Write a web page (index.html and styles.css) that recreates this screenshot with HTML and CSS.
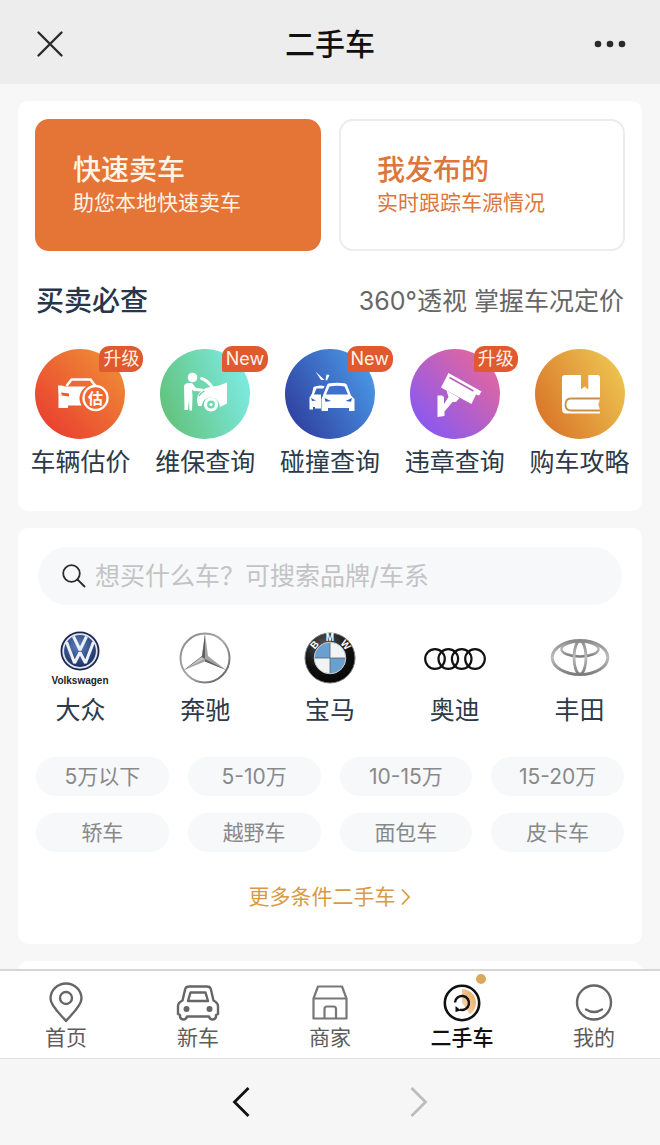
FILE: index.html
```html
<!DOCTYPE html>
<html lang="zh-CN">
<head>
<meta charset="utf-8">
<meta name="viewport" content="width=device-width, initial-scale=1">
<title>二手车</title>
<link rel="stylesheet" href="styles.css">
</head>
<body>
<div class="app">
  <header class="topbar">
    <button class="icon-btn" type="button" aria-label="关闭">
      <svg width="28" height="28" viewBox="0 0 28 28" fill="none" stroke="#2b2b2b" stroke-width="2.4" stroke-linecap="round"><path d="M2.500 2.500 25.500 25.500M25.500 2.500 2.500 25.500"/></svg>
    </button>
    <h1 class="topbar-title">二手车</h1>
    <button class="icon-btn" type="button" aria-label="更多">
      <svg width="32" height="8" viewBox="0 0 32 8" fill="#2b2b2b"><circle cx="4" cy="4" r="3.300"/><circle cx="16" cy="4" r="3.300"/><circle cx="28" cy="4" r="3.300"/></svg>
    </button>
  </header>

  <main class="content">
    <section class="card tools">
      <div class="actions">
        <a class="action action-primary" href="#sell"><strong>快速卖车</strong><span>助您本地快速卖车</span></a>
        <a class="action" href="#mine"><strong>我发布的</strong><span>实时跟踪车源情况</span></a>
      </div>
      <div class="section-head">
        <h2>买卖必查</h2>
        <p>360°透视 掌握车况定价</p>
      </div>
      <nav class="five-grid">
        <a class="tool" href="#value">
          <span class="disc disc-red">
            <svg viewBox="0 0 90 90">
              <path d="M31.500 37 36.500 30.500H55.500L60 36.500" fill="none" stroke="#fff" stroke-width="2.600" stroke-linejoin="round"/>
              <path d="M23 36.500h4l3 1h21q-7 5-6.500 13 .5 3 2 6H33v2.500h-9.500V47.500z" fill="#fff"/>
              <path d="M26 43.500l8 1v3l-7-1z" fill="#ee5a2e"/>
              <circle cx="60.500" cy="49" r="12" fill="#ef6a30" stroke="#fff" stroke-width="2.400"/>
              <text x="60.500" y="54.500" class="disc-char">估</text>
            </svg>
            <span class="badge">升级</span>
          </span>
          <span class="tile-label">车辆估价</span>
        </a>
        <a class="tool" href="#maintenance">
          <span class="disc disc-green">
            <svg viewBox="0 0 90 90" fill="#fff">
              <circle cx="32.500" cy="28.500" r="4.800"/>
              <path d="M24 37q1-3 4.500-3h3.500l4 5 7 .8-.5 2.700-9-.5-1.500-1.500.5 7-.5 14H29.500L29 51l-1 10H24.500z"/>
              <path d="M41.500 29.500Q47 31 52 38" fill="none" stroke="#fff" stroke-width="3" stroke-linecap="round"/>
              <path d="M37 51q0-8 9-12l13-2.500 8-3v21l-7 3.500q-1-9-9-9.500-8 0-9.500 8.500H38z"/>
              <path d="M39 47q2-3.500 5.500-5" stroke="#64cd9d" stroke-width="1.300" fill="none"/>
              <circle cx="51" cy="55.500" r="5.500" fill="none" stroke="#fff" stroke-width="3.200"/>
              <circle cx="51" cy="55.500" r="1.600"/>
            </svg>
            <span class="badge">New</span>
          </span>
          <span class="tile-label">维保查询</span>
        </a>
        <a class="tool" href="#collision">
          <span class="disc disc-blue">
            <svg viewBox="0 0 90 90" fill="#fff">
              <path d="M30.500 22.500l9 8.500h-3.500zM41.500 25.500l3 .5-2.500 5.500-1.500-.5z"/>
              <path d="M28.500 38q5-2.500 11-1l-1 2.500h-7l-2.500 6H36v14h-6V58h-2v2.500h-3.500V48.500l2.500-4z"/>
              <path d="M38 46.500 42 36q.8-1.500 2.500-1.800 8-1 15 0 1.800.3 2.500 1.800l4 10.500 3.500 3.500v12h-5.500v-3H43v3h-6.500V50z"/>
              <path d="M41 45.500 44.500 37.500q7.500-1.300 15 0L63 45.500z" fill="#3e70cf"/>
              <path d="M39.500 49l6.500 3-5.500 .8zM67 49l-6.500 3 5.500 .8zM26 49l5 2.500-4 .5z" fill="#345dbc"/>
            </svg>
            <span class="badge">New</span>
          </span>
          <span class="tile-label">碰撞查询</span>
        </a>
        <a class="tool" href="#violation">
          <span class="disc disc-purple">
            <svg viewBox="0 0 90 90" fill="#fff">
              <path d="M38.500 24 71.500 42.500 69 46.500 66 45.500 61.500 55 31 38.500z"/>
              <path d="M39.500 28.500 63.500 42" stroke="#b75fc5" stroke-width="1.600" fill="none"/>
              <path d="M36.500 41.500 49.500 49 46 53H42.500L34.500 62.500v4.500L27.500 68V46.500h4.500l2 1.500v7l4.500-7z"/>
            </svg>
            <span class="badge">升级</span>
          </span>
          <span class="tile-label">违章查询</span>
        </a>
        <a class="tool" href="#guide">
          <span class="disc disc-gold">
            <svg viewBox="0 0 90 90">
              <path d="M30 26H46V40.500L49.700 37.500 53.300 40.500V26H62.500Q65 26 65 28.500V50L63.300 55.500 65 61V64.500H31Q27 64.500 27 60V29Q27 26 30 26z" fill="#fff"/>
              <path d="M65 49.500H36Q30.500 49.500 30.500 55.500T36 61.500H65" fill="none" stroke="#c99048" stroke-width="1.800"/>
            </svg>
          </span>
          <span class="tile-label">购车攻略</span>
        </a>
      </nav>
    </section>

    <section class="card finder">
      <form class="search" role="search">
        <label for="q" aria-label="搜索">
          <svg width="24" height="24" viewBox="0 0 24 24" fill="none" stroke="#2b2b2b" stroke-width="1.800" stroke-linecap="round"><circle cx="9.500" cy="9.500" r="8.300"/><path d="M15.500 15.500 22.500 22.500"/></svg>
        </label>
        <input id="q" type="search" placeholder="想买什么车？可搜索品牌/车系">
      </form>

      <nav class="five-grid brands">
        <a class="brand" href="#vw">
          <svg width="60" height="56" viewBox="0 0 60 56">
            <defs><radialGradient id="vw" cx=".45" cy=".35" r=".7"><stop offset="0" stop-color="#5c82bd"/><stop offset="1" stop-color="#16275c"/></radialGradient></defs>
            <circle cx="30" cy="21" r="19.500" fill="#1b2550"/>
            <circle cx="30" cy="21" r="16.800" fill="url(#vw)" stroke="#dfe5ee" stroke-width="1.800"/>
            <g fill="none" stroke="#eef1f5" stroke-width="3" stroke-linejoin="bevel"><path d="M23.500 6.500 30 20 36.500 6.500"/><path d="M16.500 12 24.500 33 30 22.500 35.500 33 43.500 12"/></g>
            <text x="30" y="54" class="vw-name">Volkswagen</text>
          </svg>
          <span class="tile-label">大众</span>
        </a>
        <a class="brand" href="#benz">
          <svg width="56" height="56" viewBox="0 0 56 56">
            <defs><linearGradient id="mb" x1="0" y1="0" x2="1" y2="1"><stop offset="0" stop-color="#888"/><stop offset=".5" stop-color="#a9a9a9"/><stop offset="1" stop-color="#555"/></linearGradient></defs>
            <circle cx="28" cy="28" r="24.500" fill="none" stroke="url(#mb)" stroke-width="2"/>
            <path d="M28 3.500 31 26 49 40 28 31.500 7 40 25 26z" fill="#a4a4a4"/>
            <path d="M28 3.500V29L25 26zM28 29 49 40 28 31.500zM28 29 7 40 25 26z" fill="#606060"/>
            <path d="M28 29 9 39 24.500 27z" fill="#c4c4c4"/>
          </svg>
          <span class="tile-label">奔驰</span>
        </a>
        <a class="brand" href="#bmw">
          <svg width="56" height="56" viewBox="0 0 56 56">
            <defs><radialGradient id="bm" cx=".4" cy=".25" r=".8"><stop offset="0" stop-color="#55585c"/><stop offset=".6" stop-color="#111"/><stop offset="1" stop-color="#050505"/></radialGradient></defs>
            <circle cx="28" cy="28" r="25" fill="url(#bm)" stroke="#777" stroke-width="1"/>
            <circle cx="28" cy="28" r="15.800" fill="#f1f3f4"/>
            <path d="M28 28V12.200A15.800 15.800 0 0 0 12.200 28zM28 28V43.800A15.800 15.800 0 0 0 43.800 28z" fill="#6aa0cf"/>
            <path d="M28 12V44M12 28H44" stroke="#59636b" stroke-width=".8"/>
            <circle cx="28" cy="28" r="15.800" fill="none" stroke="#bfc5ca" stroke-width="1"/>
            <g class="bmw-char"><text x="28" y="11">M</text><text x="28" y="11" transform="rotate(-50 28 28)">B</text><text x="28" y="11" transform="rotate(50 28 28)">W</text></g>
          </svg>
          <span class="tile-label">宝马</span>
        </a>
        <a class="brand" href="#audi">
          <svg width="64" height="56" viewBox="0 0 64 56" fill="none" stroke="#111" stroke-width="2.200"><circle cx="12" cy="29" r="9.800"/><circle cx="25.300" cy="29" r="9.800"/><circle cx="38.700" cy="29" r="9.800"/><circle cx="52" cy="29" r="9.800"/></svg>
          <span class="tile-label">奥迪</span>
        </a>
        <a class="brand" href="#toyota">
          <svg width="64" height="56" viewBox="0 0 64 56" fill="none">
            <defs><linearGradient id="ty" x1="0" y1="0" x2="0" y2="1"><stop offset="0" stop-color="#8a8a8a"/><stop offset=".5" stop-color="#bdbdbd"/><stop offset="1" stop-color="#7c7c7c"/></linearGradient></defs>
            <g stroke="url(#ty)"><ellipse cx="32" cy="27.500" rx="27.800" ry="17" stroke-width="3"/><ellipse cx="32" cy="19" rx="18.500" ry="7.500" stroke-width="2.600"/><ellipse cx="32" cy="27.500" rx="6" ry="16.500" stroke-width="2.800"/></g>
          </svg>
          <span class="tile-label">丰田</span>
        </a>
      </nav>

      <div class="chips">
        <button class="chip" type="button">5万以下</button>
        <button class="chip" type="button">5-10万</button>
        <button class="chip" type="button">10-15万</button>
        <button class="chip" type="button">15-20万</button>
        <button class="chip" type="button">轿车</button>
        <button class="chip" type="button">越野车</button>
        <button class="chip" type="button">面包车</button>
        <button class="chip" type="button">皮卡车</button>
      </div>

      <a class="more" href="#more">更多条件二手车
        <svg width="12" height="18" viewBox="0 0 12 18" fill="none" stroke="currentColor" stroke-width="1.800"><path d="M2 1.500 9 9 2 16.500"/></svg>
      </a>
    </section>

    <section class="card next-card"></section>
  </main>

  <nav class="tabbar">
    <a class="tab" href="#home">
      <svg width="44" height="42" viewBox="0 0 44 42" fill="none" stroke="#666" stroke-width="2.400" stroke-linejoin="round"><path d="M22 40C17 34 6.500 25 6.500 17.500a15.500 15 0 0 1 31 0C37.500 25 27 34 22 40z"/><circle cx="22" cy="17" r="6"/></svg>
      <span>首页</span>
    </a>
    <a class="tab" href="#new">
      <svg width="44" height="42" viewBox="0 0 44 42" fill="none" stroke="#666" stroke-width="2.400" stroke-linejoin="round"><path d="M13 5.500H31Q34 5.500 34.800 8L37.500 19.500Q42 22 42 25V33L40 34V36Q39 38.500 36.500 38.500T33 35.500H11Q10 38.500 7.500 38.500T4 36V34L2 33V25Q2 22 6.500 19.500L9.200 8Q10 5.500 13 5.500z"/><path d="M14.500 11.500H29.500L32 20H12z"/><circle cx="10.500" cy="28" r="1.800" fill="#666"/><circle cx="33.500" cy="28" r="1.800" fill="#666"/></svg>
      <span>新车</span>
    </a>
    <a class="tab" href="#shop">
      <svg width="44" height="42" viewBox="0 0 44 42" fill="none" stroke="#777" stroke-width="2.200" stroke-linejoin="round"><path d="M10 5.500H34L38.500 17.500V37.500H5.500V17.500zM5.500 17.500H38.500M16.500 37.500V28Q16.500 25.500 19 25.500H25.500Q28 25.500 28 28V37.500"/></svg>
      <span>商家</span>
    </a>
    <a class="tab tab-active" href="#used" aria-current="page">
      <svg width="44" height="42" viewBox="0 0 44 42" fill="none"><defs><linearGradient id="hot" x1="1" y1="0" x2="0" y2="1"><stop offset="0" stop-color="#e9a257"/><stop offset="1" stop-color="#f9dfc3"/></linearGradient></defs><path d="M22 22V8a14 14 0 0 1 8 25.500z" fill="url(#hot)"/><circle cx="22" cy="22" r="17.200" stroke="#111" stroke-width="2.600"/><path d="M15 21.500a7 7 0 1 1 5 7.200" stroke="#111" stroke-width="2.400"/><path d="M15.500 25V31L21 29.500z" fill="#111"/></svg>
      <span>二手车</span>
      <i class="dot"></i>
    </a>
    <a class="tab" href="#me">
      <svg width="44" height="42" viewBox="0 0 44 42" fill="none" stroke="#666" stroke-width="2.400" stroke-linecap="round"><circle cx="22" cy="21.500" r="17"/><path d="M14 28.500Q22 33.500 30 28.500"/></svg>
      <span>我的</span>
    </a>
  </nav>

  <footer class="browser-nav">
    <button class="icon-btn" type="button" aria-label="后退"><svg width="20" height="32" viewBox="0 0 20 32" fill="none" stroke="#111" stroke-width="2.800"><path d="M17.500 2 3.500 16 17.500 30"/></svg></button>
    <button class="icon-btn" type="button" aria-label="前进"><svg width="20" height="32" viewBox="0 0 20 32" fill="none" stroke="#bdbdbd" stroke-width="2.800"><path d="M2.500 2 16.500 16 2.500 30"/></svg></button>
  </footer>
</div>
</body>
</html>
```

FILE: styles.css
```css
* {
  box-sizing: border-box;
}

body {
  margin: 0;
  font-family: Inter, "Noto Sans CJK SC", sans-serif;
  color: #2c3a49;
  background: #f7f7f7;
}

a {
  color: inherit;
  text-decoration: none;
}

button {
  padding: 0;
  border: 0;
  background: none;
  font: inherit;
  color: inherit;
  cursor: pointer;
}

svg {
  display: block;
}

h1,
h2,
p {
  margin: 0;
}

.app {
  display: flex;
  flex-direction: column;
  height: 100vh;
}

.topbar {
  flex: none;
  display: flex;
  align-items: center;
  justify-content: space-between;
  height: 84px;
  padding: 4px 30px 0;
  background: #ededed;
}

.icon-btn {
  display: flex;
  align-items: center;
  justify-content: center;
  width: 40px;
  height: 40px;
}

.topbar-title {
  font-size: 30px;
  line-height: 40px;
  font-weight: 500;
  color: #111;
}

.content {
  flex: 1;
  min-height: 0;
  display: flex;
  flex-direction: column;
  gap: 17px;
  padding: 17px 18px 0;
  overflow-y: auto;
  scrollbar-width: none;
}

.card {
  flex: none;
  background: #fff;
  border-radius: 10px;
}

.tools {
  padding: 18px 0 31px;
}

.actions {
  display: grid;
  grid-template-columns: 1fr 1fr;
  gap: 18px;
  padding: 0 17px;
}

.action {
  display: flex;
  flex-direction: column;
  justify-content: center;
  height: 132px;
  padding: 0 36px;
  border: 2px solid #ececee;
  border-radius: 14px;
  color: #dc763c;
}

.action strong {
  font-size: 28px;
  line-height: 36px;
  font-weight: 500;
}

.action span {
  font-size: 21px;
  line-height: 30px;
}

.action-primary {
  border-color: #e57437;
  background: #e57437;
  color: #fff5e6;
}

.section-head {
  display: flex;
  align-items: center;
  justify-content: space-between;
  margin-top: 30px;
  padding: 0 18px;
}

.section-head h2 {
  font-size: 28px;
  line-height: 40px;
  font-weight: 500;
  color: #26364b;
}

.section-head p {
  font-size: 25px;
  line-height: 40px;
  color: #666;
}

.five-grid {
  display: grid;
  grid-template-columns: repeat(5, 1fr);
}

.tools .five-grid {
  margin-top: 28px;
}

.tool,
.brand {
  display: flex;
  flex-direction: column;
  align-items: center;
}

.disc {
  position: relative;
  width: 90px;
  height: 90px;
  border-radius: 50%;
}

.disc-red {
  background: linear-gradient(45deg, #e94430 15%, #ef8c36 90%);
}

.disc-green {
  background: linear-gradient(70deg, #64c583 15%, #7be8dc 85%);
}

.disc-blue {
  background: linear-gradient(60deg, #3045a4 15%, #4a98e6 90%);
}

.disc-purple {
  background: linear-gradient(45deg, #8c59ee 15%, #e7679b 90%);
}

.disc-gold {
  background: linear-gradient(60deg, #da7a2c 15%, #edc450 90%);
}

.disc-char {
  font-size: 15px;
  font-weight: 700;
  fill: #fff;
  text-anchor: middle;
}

.badge {
  position: absolute;
  top: -3px;
  right: -18px;
  padding: 0 4px;
  border-radius: 10px 12px 12px 2px;
  background: #e1592f;
  color: #fff3e8;
  font-size: 18px;
  line-height: 26px;
  white-space: nowrap;
}

.tile-label {
  font-size: 25px;
  line-height: 36px;
  white-space: nowrap;
}

.tool .tile-label {
  margin-top: 5px;
}

.finder {
  padding: 19px 0 32px;
}

.search {
  display: flex;
  align-items: center;
  gap: 9px;
  height: 58px;
  margin: 0 20px;
  padding: 0 24px;
  border-radius: 29px;
  background: #f7f8fa;
}

.search input {
  flex: 1;
  min-width: 0;
  padding: 0;
  border: 0;
  outline: 0;
  background: none;
  font: inherit;
  font-size: 25px;
  line-height: 36px;
  color: #2c3a49;
}

.search input::placeholder {
  color: #c3c3c5;
  opacity: 1;
}

.brands {
  margin-top: 25px;
}

.brand .tile-label {
  margin-top: 6px;
}

.vw-name {
  font: 700 10px "Liberation Sans", sans-serif;
  fill: #222;
  text-anchor: middle;
}

.bmw-char {
  font: 700 10px "Liberation Sans", sans-serif;
  fill: #fff;
  text-anchor: middle;
}

.chips {
  display: grid;
  grid-template-columns: repeat(4, 1fr);
  gap: 17px 19px;
  margin-top: 29px;
  padding: 0 18px;
}

.chip {
  height: 39px;
  border-radius: 20px;
  background: #f7f8fa;
  color: #88898b;
  font-size: 21px;
  line-height: 30px;
}

.more {
  display: flex;
  align-items: center;
  justify-content: center;
  gap: 4px;
  margin-top: 30px;
  font-size: 21px;
  line-height: 30px;
  color: #d99a45;
}

.next-card {
  height: 200px;
}

.tabbar {
  flex: none;
  display: grid;
  grid-template-columns: repeat(5, 1fr);
  border-top: 2px solid #d6d6d6;
  border-bottom: 1px solid #e2e2e2;
  background: #fff;
}

.tab {
  position: relative;
  display: flex;
  flex-direction: column;
  align-items: center;
  padding: 10px 0 5px;
  font-size: 21px;
  line-height: 30px;
  color: #5c5c5c;
}

.tab-active {
  color: #111;
  font-weight: 500;
}

.dot {
  position: absolute;
  top: 3px;
  left: calc(50% + 14px);
  width: 10px;
  height: 10px;
  border-radius: 50%;
  background: #dca85e;
}

.browser-nav {
  flex: none;
  display: flex;
  align-items: center;
  justify-content: center;
  gap: 138px;
  height: 86px;
  background: #f6f6f6;
}
```
